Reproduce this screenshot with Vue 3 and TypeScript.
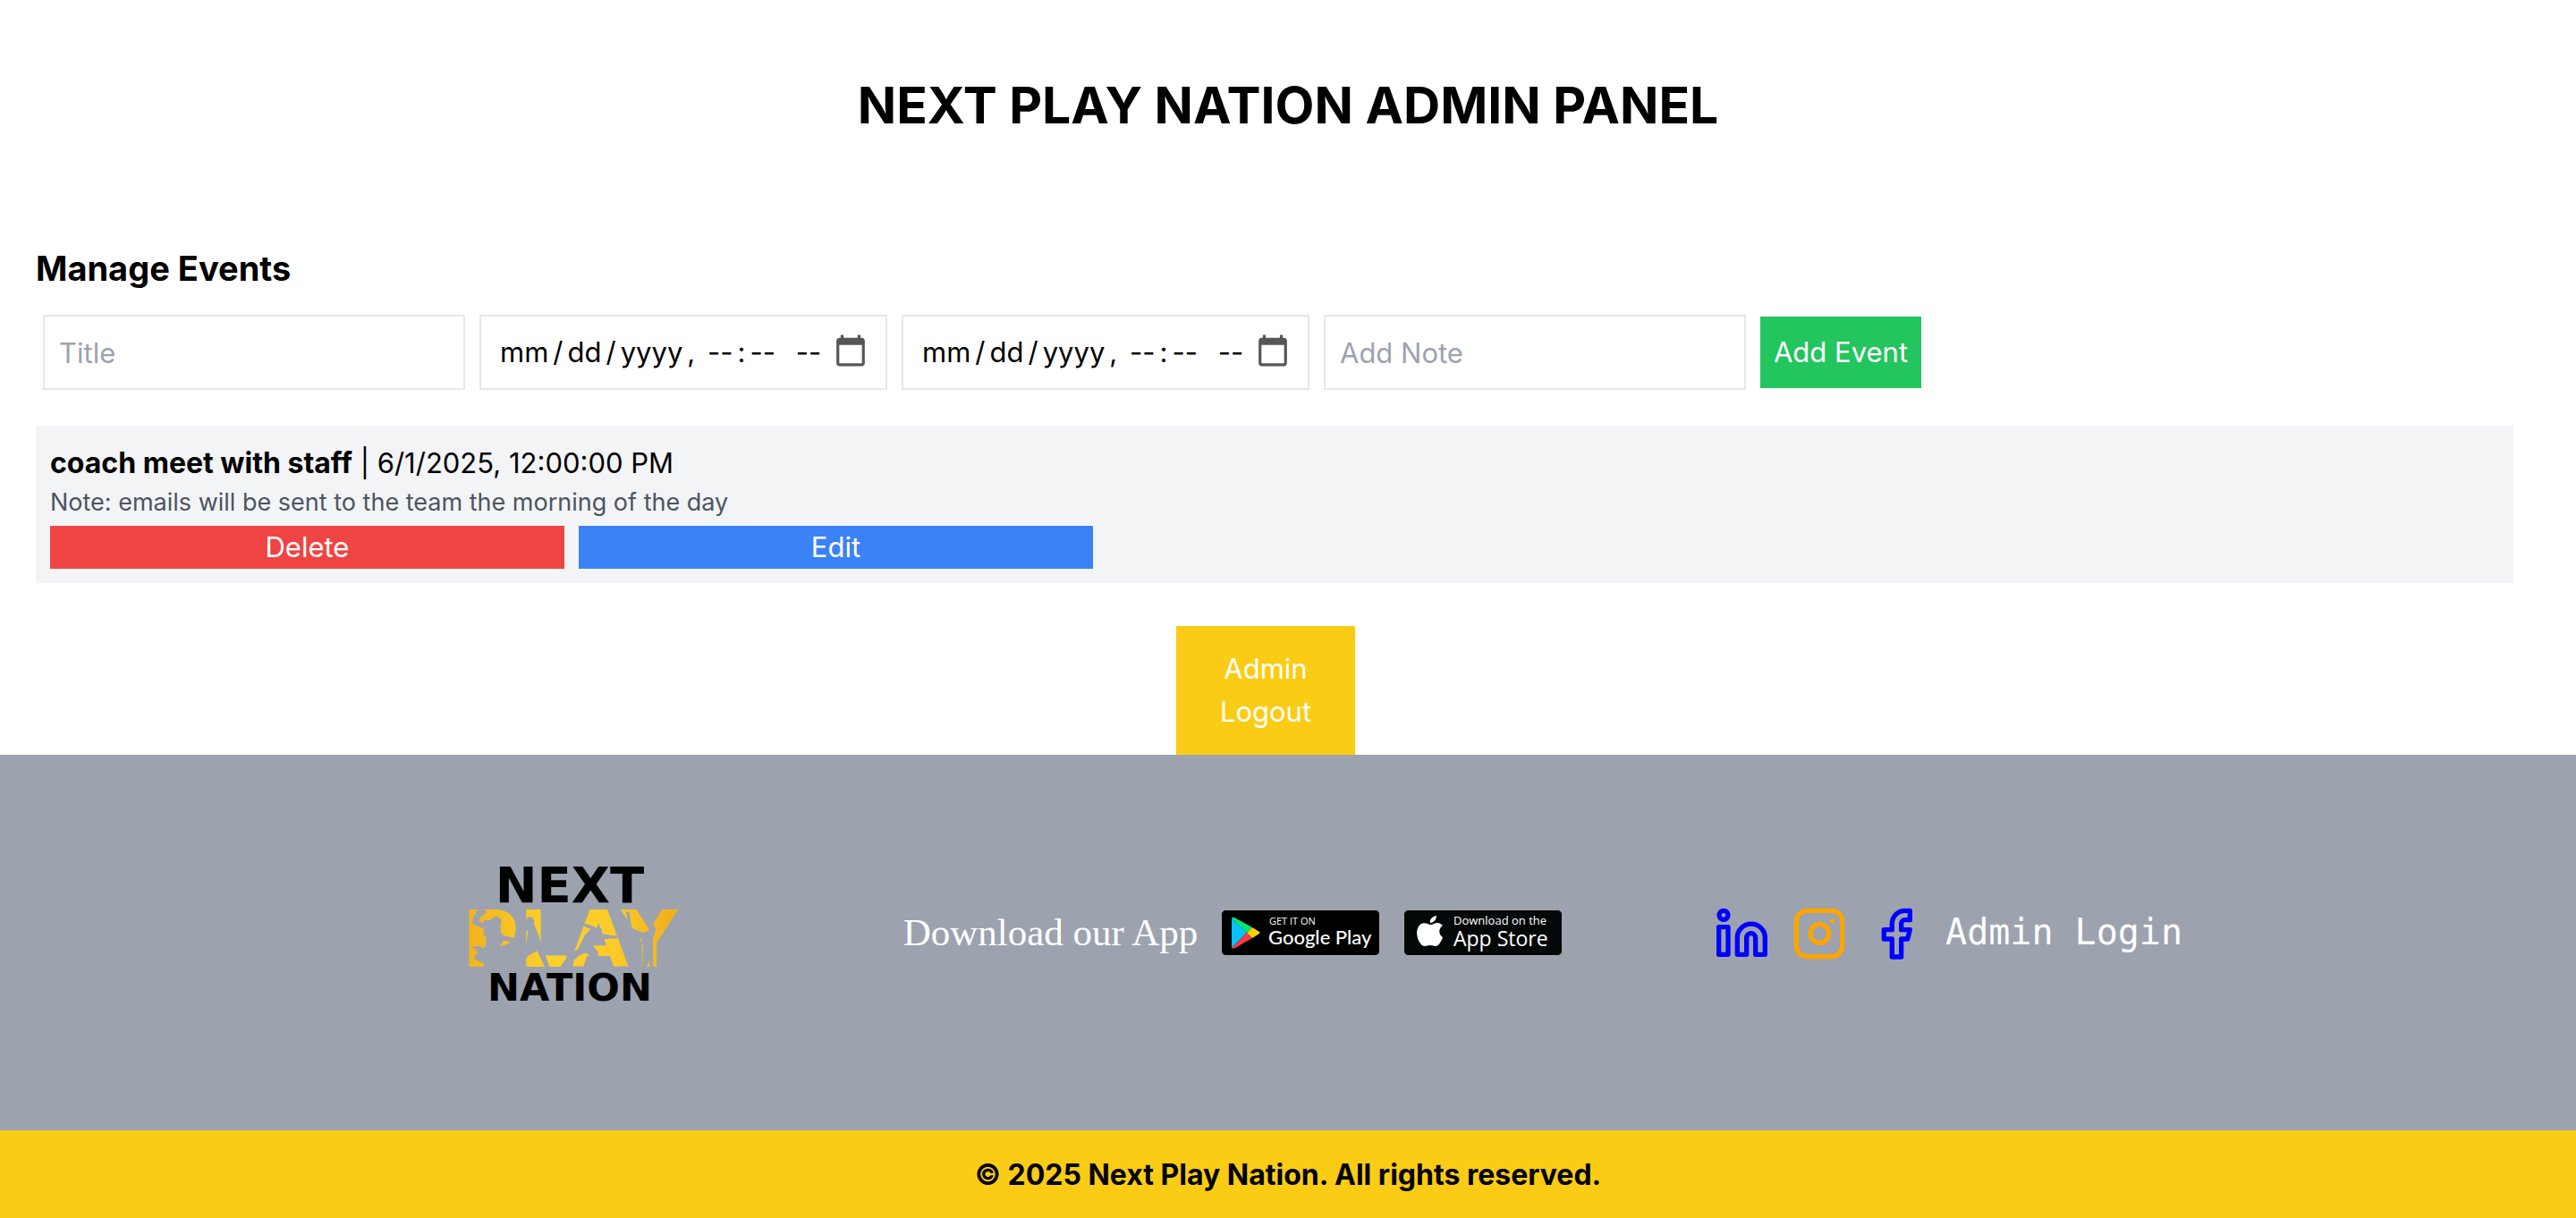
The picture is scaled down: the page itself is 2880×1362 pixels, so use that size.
<script setup lang="ts">
import { ref } from 'vue'

interface TeamEvent {
  id: number
  title: string
  start: string
  note: string
}

const title = ref('')
const start = ref('')
const end = ref('')
const note = ref('')

const events = ref<TeamEvent[]>([
  {
    id: 1,
    title: 'coach meet with staff',
    start: '6/1/2025, 12:00:00 PM',
    note: 'emails will be sent to the team the morning of the day',
  },
])

function addEvent() {
  if (!title.value || !start.value) return
  events.value.push({
    id: Date.now(),
    title: title.value,
    start: new Date(start.value).toLocaleString('en-US'),
    note: note.value,
  })
  title.value = ''
  start.value = ''
  end.value = ''
  note.value = ''
}

function removeEvent(id: number) {
  events.value = events.value.filter((e) => e.id !== id)
}

function editEvent(item: TeamEvent) {
  title.value = item.title
  note.value = item.note
}
</script>

<template>
  <div class="page">
    <h1 class="page-title">NEXT PLAY NATION ADMIN PANEL</h1>

    <main class="panel">
      <h2 class="section-title">Manage Events</h2>
      <form class="event-form" @submit.prevent="addEvent">
        <input v-model="title" class="field text-field" type="text" placeholder="Title" aria-label="Title" />
        <input v-model="start" class="field date-field" type="datetime-local" aria-label="Start" />
        <input v-model="end" class="field date-field" type="datetime-local" aria-label="End" />
        <input v-model="note" class="field text-field" type="text" placeholder="Add Note" aria-label="Add Note" />
        <button class="add-button" type="submit">Add Event</button>
      </form>

      <ul class="event-list">
        <li v-for="item in events" :key="item.id" class="event-card">
          <p class="event-line"><strong>{{ item.title }}</strong> | {{ item.start }}</p>
          <p class="event-note">Note: {{ item.note }}</p>
          <div class="event-actions">
            <button class="action delete" type="button" @click="removeEvent(item.id)">Delete</button>
            <button class="action edit" type="button" @click="editEvent(item)">Edit</button>
          </div>
        </li>
      </ul>
    </main>

    <div class="logout-row">
      <button class="logout" type="button">Admin Logout</button>
    </div>

    <footer>
      <div class="footer-main">
        <div class="footer-inner">
          <div class="brand">
            <svg width="274" height="190" viewBox="-20 -20 274 190" role="img" aria-label="Next Play Nation">
              <defs>
                <linearGradient id="gold" x1="0" x2="1" y1="0" y2="0">
                  <stop offset="0" stop-color="#f2b01c" />
                  <stop offset="0.4" stop-color="#fdd02b" />
                  <stop offset="0.7" stop-color="#fccb29" />
                  <stop offset="1" stop-color="#efad1c" />
                </linearGradient>
              </defs>
              <text class="brand-text" x="115" y="112" font-size="87" fill="url(#gold)">PLAY</text>
              <!-- athletes cut out of the lettering -->
              <g transform="translate(-22.3 -19) scale(.3333)" fill="#9ca3af">
                <path d="M98 206q14-8 34 0-2 10-18 18l-8 16 40 14q-4-28 20-29 22 4 14 30-8 4-2 12l8 20 30 8 18 6-4 12-40-8-12 18q-6 16 10 18 46 0 68-24l-2 20-6 56h-122l-2-10-34-18 14-22-20-16 24-4 20 12 4-46-10-24-34-14q-8-20 8-35z" />
                <path d="M256 202l6 0-8 40 12 4q-2-20 14-20 16 4 12 24l14 34 10 30 28 80h-16l-26-54-32 18-14 34-4-26 12-36 8-56-38-6z" />
                <path d="M452 248q30 2 48 14 12-6 16 2 10 8-2 18l40 6 20 2-4 8-38 2-26 10-18 10 20 24-2 16-20 2-20-16-24 10-16 16-4 22h-42l22-32 38-30 22-44 20-22-28-12z" />
                <path d="M600 206l12 6 8 52 40 16 16-8q4-18 14-18 14 4 10 18l-10 30 2 92h-10l-6-20-6 20h-14l2-66-4-28-40-16z" />
              </g>
              <text class="brand-text" x="115" y="40" font-size="56">NEXT</text>
              <text class="brand-text" x="115" y="150" font-size="43">NATION</text>
            </svg>
          </div>

          <div class="downloads">
            <span class="download-label">Download our App</span>
            <a class="badge" href="#google-play">
              <svg width="178" height="52" viewBox="0 0 178 52" role="img" aria-label="Get it on Google Play">
                <rect x=".5" y=".5" width="177" height="51" rx="5" fill="#000" stroke="#a6a6a6" />
                <path d="M12 10v33l17-17z" fill="#00c3ff" />
                <path d="M12 10q1-2 4-.5L35 20l-6 6z" fill="#00e676" />
                <path d="M12 43l17-17 6 6-19 11q-3 1-4 0z" fill="#ff3a44" />
                <path d="M35 20l8 5q1 1 0 2l-8 5-6-6z" fill="#ffd000" />
                <text class="google-small" x="54" y="17">GET IT ON</text>
                <text class="google-large" x="53" y="39">Google Play</text>
              </svg>
            </a>
            <a class="badge" href="#app-store">
              <svg width="178" height="52" viewBox="0 0 178 52" role="img" aria-label="Download on the App Store">
                <rect x=".5" y=".5" width="177" height="51" rx="5" fill="#030707" stroke="#a6a6a6" />
                <path d="M30 15c-1-4 2-7 7-8 0 4-3 8-7 8zM30 17c3 0 5-2 8-2 2 0 4 1 6 3-5 3-5 10 0 13-2 6-5 10-8 10-2 0-3-1-6-1s-4 1-6 1c-6 0-12-14-7-22 4-6 9-3 13-2z" fill="#fff" />
                <text class="apple-small" x="56" y="17">Download on the</text>
                <text class="apple-large" x="56" y="41">App Store</text>
              </svg>
            </a>
          </div>

          <nav class="social">
            <a href="#linkedin" aria-label="LinkedIn">
              <svg width="58" height="58" viewBox="0 0 174 174" fill="none" stroke="#00f" stroke-width="16" stroke-linejoin="round">
                <circle cx="24" cy="25" r="15" />
                <path d="M8 65h31v92H8z" />
                <path d="M70 157v-56a46 46 0 0 1 93 0v56h-32v-56a15 15 0 0 0-30 0v56z" />
              </svg>
            </a>
            <a href="#instagram" aria-label="Instagram">
              <svg width="58" height="58" viewBox="0 0 174 174" fill="none" stroke="orange" stroke-width="16">
                <rect x="10" y="10" width="154" height="154" rx="36" />
                <circle cx="88" cy="87" r="31" />
                <circle cx="130" cy="45" r="8" fill="orange" stroke="none" />
              </svg>
            </a>
            <a class="facebook" href="#facebook" aria-label="Facebook">
              <svg width="36" height="58" viewBox="0 0 108 174" fill="none" stroke="#00f" stroke-width="16" stroke-linejoin="round">
                <path d="M97 10H80a43 43 0 0 0-43 43v21H10v31h27v60h31v-60h21l8-31H68V53a12 12 0 0 1 12-12h17z" />
              </svg>
            </a>
            <a class="admin-login" href="#login">Admin Login</a>
          </nav>
        </div>
      </div>
      <p class="copyright">© 2025 Next Play Nation. All rights reserved.</p>
    </footer>
  </div>
</template>

<style>
body {
  margin: 0;
  background: #fff;
}
</style>

<style scoped>
* {
  box-sizing: border-box;
}

.page {
  font-family: Inter, 'Liberation Sans', sans-serif;
  font-size: 31px;
  line-height: 48px;
  color: #000;
}

h1,
h2,
p,
ul {
  margin: 0;
  padding: 0;
}

button,
input {
  font: inherit;
  border: 0;
  border-radius: 0;
}

button {
  padding: 0;
  color: #fff;
}

.page-title {
  padding: 88px 0 100px;
  font-size: 57px;
  line-height: 60px;
  font-weight: 700;
  text-align: center;
}

.panel {
  padding: 24px 70px 0 40px;
}

.section-title {
  font-size: 38px;
  line-height: 56px;
  font-weight: 700;
}

.event-form {
  display: flex;
  align-items: center;
  gap: 16px;
  padding: 24px 8px 40px;
}

.field {
  height: 84px;
  padding: 16px;
  border: 2px solid #e5e7eb;
  background: #fff;
  color: #000;
}

.field::placeholder {
  color: #9ca3af;
  opacity: 1;
}

.text-field {
  width: 472px;
}

.date-field {
  width: 456px;
}

.date-field::-webkit-datetime-edit {
  padding: 0;
}

.date-field::-webkit-datetime-edit-month-field,
.date-field::-webkit-datetime-edit-day-field,
.date-field::-webkit-datetime-edit-year-field,
.date-field::-webkit-datetime-edit-hour-field,
.date-field::-webkit-datetime-edit-minute-field {
  padding: 0 5px;
}

.date-field::-webkit-datetime-edit-ampm-field {
  padding: 0 0 0 12px;
}

.date-field::-webkit-calendar-picker-indicator {
  width: 38px;
  height: 38px;
  margin: 0 4px 4px 0;
  padding: 0;
  background-size: 38px 38px;
  opacity: 0.66;
}

.add-button {
  width: 180px;
  height: 80px;
  background: #22c55e;
}

.event-list {
  list-style: none;
}

.event-card {
  padding: 18px 16px 16px;
  background: #f3f4f6;
}

.event-line {
  line-height: 48px;
}

.event-line strong {
  font-size: 32px;
  line-height: 40px;
}

.event-note {
  font-size: 27px;
  line-height: 40px;
  color: #4b5563;
}

.event-actions {
  display: flex;
  gap: 16px;
  margin-top: 6px;
}

.action {
  width: 21%;
  height: 48px;
}

.delete {
  background: #ef4444;
}

.edit {
  background: #3b82f6;
}

.logout-row {
  display: flex;
  justify-content: center;
  padding: 48px 50px 0 0;
}

.logout {
  width: 200px;
  padding: 24px 40px;
  background: #facc15;
}

.footer-main {
  padding: 100px 0 120px;
  background: #9ca3af;
}

.footer-inner {
  display: flex;
  align-items: center;
  justify-content: space-between;
  max-width: 2000px;
  height: 200px;
  margin: 0 auto;
}

.brand {
  display: flex;
  justify-content: center;
  width: 398px;
}

.brand-text {
  font-family: 'DejaVu Sans', sans-serif;
  font-weight: 700;
  line-height: 1;
  text-anchor: middle;
}

.downloads {
  display: flex;
  align-items: center;
  padding-bottom: 2px;
}

.download-label {
  font-family: 'Liberation Serif', serif;
  font-size: 43px;
  color: #fff;
}

.badge {
  display: block;
  height: 52px;
  margin-left: 26px;
}

.badge text {
  fill: #fff;
}

.google-small {
  font: 500 11px 'Open Sans', sans-serif;
}

.google-large {
  font: 500 22px Lato, sans-serif;
}

.apple-small {
  font: 500 13px 'Open Sans', sans-serif;
}

.apple-large {
  font: 500 23px 'Open Sans', sans-serif;
}

.social {
  display: flex;
  align-items: center;
}

.social svg {
  display: block;
}

.social a + a {
  margin-left: 28px;
}

.social .facebook {
  margin-left: 40px;
}

.social .admin-login {
  margin-left: 36px;
  padding-bottom: 4px;
  font-family: 'DejaVu Sans Mono', monospace;
  font-size: 40px;
  color: #fff;
  text-decoration: none;
}

.copyright {
  padding: 26px 0 24px;
  background: #facc15;
  font-size: 32px;
  font-weight: 700;
  text-align: center;
}
</style>
